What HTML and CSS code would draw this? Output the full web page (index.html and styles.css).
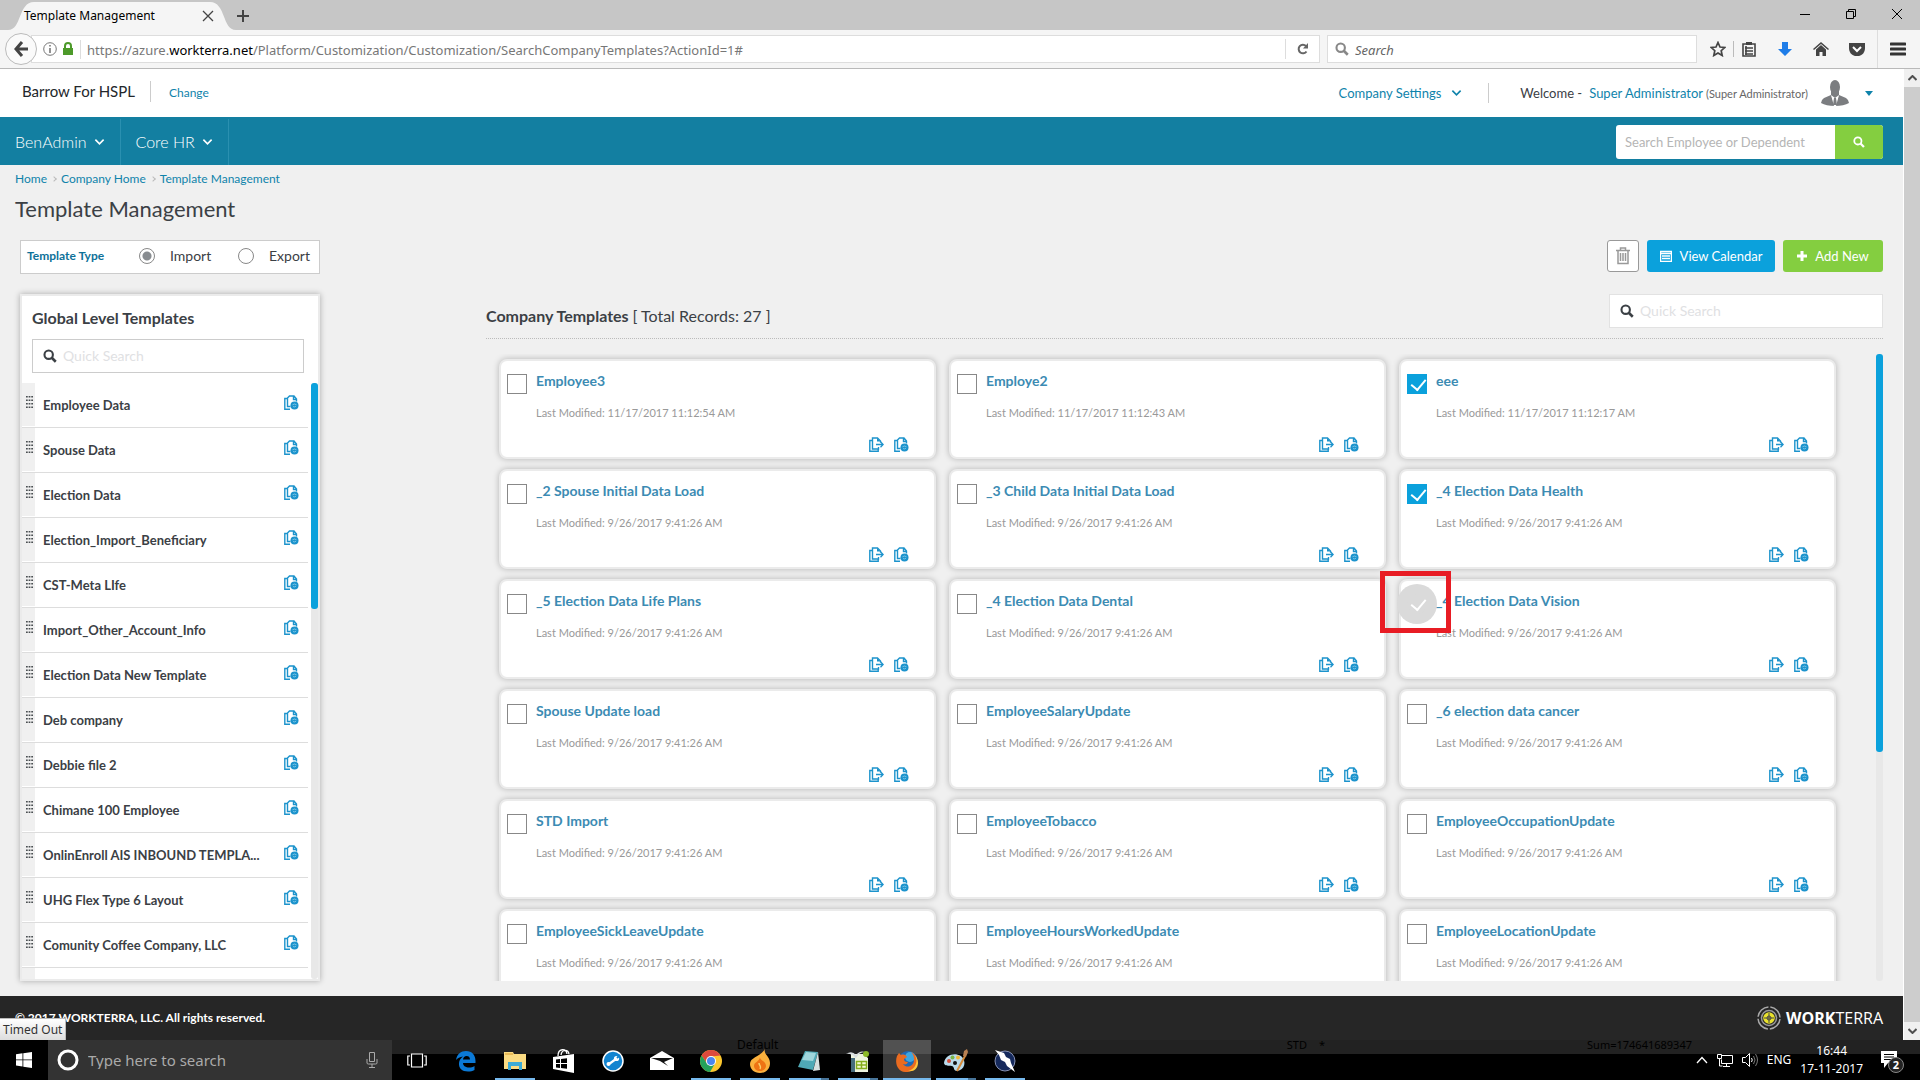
FILE: index.html
```
<!DOCTYPE html>
<html lang="en">
<head>
<meta charset="utf-8">
<title>Template Management</title>
<link rel="stylesheet" href="styles.css">
</head>
<body>
<svg class="defs" aria-hidden="true">
  <symbol id="mag" viewBox="0 0 16 16"><circle cx="6.5" cy="6.5" r="4.8" fill="none" stroke="currentColor" stroke-width="2.4"/><path d="M10 10l4.6 4.6" stroke="currentColor" stroke-width="3" fill="none"/></symbol>
  <symbol id="chev" viewBox="0 0 12 8"><path d="M1.5 1.5L6 6l4.500-4.500" fill="none" stroke="currentColor" stroke-width="1.800"/></symbol>
  <symbol id="copy" viewBox="0 0 15 15"><path d="M3 3.500H.8v10.700h8.400V12.500M9.500 10v2H3.500V1h5l3 3v1.500" fill="none" stroke="currentColor" stroke-width="1.400"/><path d="M8 1v3.500h3.500z" fill="currentColor"/><path d="M7 7.500h7M11.500 4.800l2.700 2.700-2.700 2.700" fill="none" stroke="currentColor" stroke-width="1.300"/></symbol>
  <symbol id="block" viewBox="0 0 15 15"><path d="M3 3.500H.8v10.700H6M6.500 11.500h-3V3l2-2h4.500L12.500 4v2.500M9.500 1v3.500h3" fill="none" stroke="currentColor" stroke-width="1.400"/><circle cx="10.500" cy="10.500" r="4" fill="currentColor"/><path d="M8.500 9.800q2-1.600 4 0M9 11.500q1.500 1 3-.3" fill="none" stroke="#8fd0ee" stroke-width=".8"/></symbol>
  <symbol id="grip" viewBox="0 0 8 14"><path d="M0 1h2M3 1h2M6 1h2M0 5h2M3 5h2M6 5h2M0 9h2M3 9h2M6 9h2M0 13h2M3 13h2M6 13h2" stroke="#4a4f52" stroke-width="1.500"/></symbol>
</svg>

<header class="browser">
  <div class="titlebar">
    <div class="tab"><svg class="tab-shape" viewBox="0 0 228 28" preserveAspectRatio="none"><path d="M0 28C14 28 10 0 26 0H202C218 0 214 28 228 28Z" fill="#f5f5f5"/></svg><span class="tab-title">Template Management</span><button class="bare tab-close" aria-label="Close tab"><svg width="12" height="12" viewBox="0 0 12 12"><path d="M1 1l10 10M11 1L1 11" stroke="#444" stroke-width="1.300"/></svg></button></div>
    <button class="bare new-tab" aria-label="New tab"><svg width="12" height="12" viewBox="0 0 12 12"><path d="M6 0v12M0 6h12" stroke="#444" stroke-width="2"/></svg></button>
    <div class="window-controls">
      <button class="bare" aria-label="Minimize"><svg width="10" height="10"><path d="M0 5.500h10" stroke="#000"/></svg></button>
      <button class="bare" aria-label="Restore"><svg width="10" height="10" fill="none" stroke="#000"><path d="M.5 2.500h7v7h-7zM2.500 2.500v-2h7v7h-2"/></svg></button>
      <button class="bare" aria-label="Close"><svg width="12" height="12"><path d="M1 1l10 10M11 1L1 11" stroke="#000"/></svg></button>
    </div>
  </div>
  <div class="toolbar">
    <button class="bare back" aria-label="Back"><svg width="14" height="16" viewBox="0 0 14 16"><path d="M8 1L2 8l6 7M2 8h12" fill="none" stroke="#444" stroke-width="3"/></svg></button>
    <div class="urlbar">
      <svg width="14" height="14" viewBox="0 0 14 14" fill="none" stroke="#777"><circle cx="7" cy="7" r="6.300"/><path d="M7 6v5M7 3v1.500" stroke-width="1.600"/></svg>
      <svg class="lock" width="12" height="14" viewBox="0 0 12 14"><rect x="1" y="6" width="10" height="7" fill="#4d9a2a"/><path d="M3 7V4a3 3 0 0 1 6 0v3" fill="none" stroke="#4d9a2a" stroke-width="2"/></svg>
      <span class="url">https://azure.<b>workterra.net</b>/Platform/Customization/Customization/SearchCompanyTemplates?ActionId=1#</span>
      <button class="bare reload" aria-label="Reload"><svg width="12" height="12" viewBox="0 0 12 12"><path d="M9.500 8.500A4.300 4.300 0 1 1 9 3" fill="none" stroke="#666" stroke-width="2"/><path d="M11 0v5.500H6z" fill="#666"/></svg></button>
    </div>
    <label class="websearch"><svg width="14" height="14"><use href="#mag"/></svg><input type="text" placeholder="Search" aria-label="Search the web"></label>
    <div class="tools">
      <button class="bare" aria-label="Bookmark"><svg width="16" height="16" viewBox="0 0 16 16"><path d="M8 1.500l2 4.500 4.800.5-3.600 3.200 1 4.800L8 12l-4.200 2.500 1-4.800L1.200 6.500 6 6z" fill="none" stroke="#444" stroke-width="1.700"/></svg></button>
      <i class="rule"></i>
      <button class="bare" aria-label="Library"><svg width="14" height="16" viewBox="0 0 14 16"><path d="M1 3h12v12H1zM3 7h8M3 10h8M3 13h8M4 5v9" fill="none" stroke="#444" stroke-width="1.600"/><path d="M4 1h6v3H4z" fill="#444"/></svg></button>
      <button class="bare" aria-label="Downloads"><svg width="14" height="14" viewBox="0 0 14 14"><path d="M4 0h6v7h4l-7 7-7-7h4z" fill="#1f7de8"/></svg></button>
      <button class="bare" aria-label="Home"><svg width="16" height="14" viewBox="0 0 16 14"><path d="M8 0l8 7-1 1-7-6-7 6-1-1zM3 7.500L8 3l5 4.500V14H9.500v-4h-3v4H3z" fill="#444"/></svg></button>
      <button class="bare" aria-label="Pocket"><svg width="16" height="14" viewBox="0 0 16 14"><path d="M0 1h16v5c0 11-16 11-16 0z" fill="#444"/><path d="M4 5l4 4 4-4" fill="none" stroke="#fff" stroke-width="2"/></svg></button>
      <i class="rule tall"></i>
      <button class="bare" aria-label="Menu"><svg width="16" height="14" viewBox="0 0 16 14"><path d="M1 2h14M1 7h14M1 12h14" stroke="#333" stroke-width="3" stroke-linecap="round"/></svg></button>
    </div>
  </div>
</header>

<div class="viewport">
  <div class="page">
    <header class="account">
      <span class="company">Barrow For HSPL</span>
      <a class="change" href="#">Change</a>
      <a class="settings" href="#">Company Settings <svg width="11" height="8"><use href="#chev"/></svg></a>
      <div class="welcome"><span>Welcome -</span><a href="#">Super Administrator</a><small>(Super Administrator)</small></div>
      <svg class="avatar" width="28" height="26" viewBox="0 0 28 26"><ellipse cx="14" cy="7" rx="5" ry="7" fill="#7b7d80"/><path d="M10 11h8v5l-4 3-4-3z" fill="#7b7d80"/><path d="M10 15l4 10 4-10 7 3q3 2 3 5-5 3-14 3T0 23q0-3 3-5z" fill="#7b7d80"/><path d="M10 15l3 11h2l3-11-4 3z" fill="#fff"/><path d="M13 18h2l1 7h-4z" fill="#7b7d80"/></svg>
      <button class="bare" aria-label="Account menu"><svg width="8" height="5"><path d="M0 0h8L4 5z" fill="#0f83ab"/></svg></button>
    </header>

    <nav class="mainnav">
      <button class="bare">BenAdmin <svg width="11" height="8"><use href="#chev"/></svg></button>
      <button class="bare">Core HR <svg width="11" height="8"><use href="#chev"/></svg></button>
      <form class="find"><input type="text" placeholder="Search Employee or Dependent" aria-label="Search Employee or Dependent"><button type="button" aria-label="Search"><svg width="12" height="12"><use href="#mag"/></svg></button></form>
    </nav>

    <main>
      <nav class="crumbs" aria-label="Breadcrumb"><a href="#">Home</a><i></i><a href="#">Company Home</a><i></i><a href="#">Template Management</a></nav>
      <h1>Template Management</h1>
      <div class="actions">
        <fieldset class="type">
          <legend>Template Type</legend>
          <label><input type="radio" name="type" checked>Import</label>
          <label><input type="radio" name="type">Export</label>
        </fieldset>
        <div class="buttons">
          <button class="trash" aria-label="Delete"><svg width="14" height="18" viewBox="0 0 14 18" fill="none" stroke="#999" stroke-width="1.500"><path d="M0 3.500h14M4.500 3V1h5v2M2 4v12.500h10V4M4.500 6v8M7 6v8M9.500 6v8"/></svg></button>
          <button class="calendar"><svg width="12" height="12" viewBox="0 0 12 12" fill="none" stroke="#fff"><path d="M.5 1.500h11v10H.5zM1 3.500h10M2 6h8M2 8.500h8" stroke-width="1.500"/></svg>View Calendar</button>
          <button class="add"><svg width="10" height="10"><path d="M5 0v10M0 5h10" stroke="#fff" stroke-width="3"/></svg>Add New</button>
        </div>
      </div>

      <div class="columns">
        <aside class="global">
          <h2>Global Level Templates</h2>
          <label class="quick"><svg width="14" height="14"><use href="#mag"/></svg><input type="text" placeholder="Quick Search" aria-label="Search global templates"></label>
          <div class="scroller">
            <ul>
              <li><span class="grip"><svg><use href="#grip"/></svg></span><span class="name">Employee Data</span><svg class="act"><use href="#block"/></svg></li>
              <li><span class="grip"><svg><use href="#grip"/></svg></span><span class="name">Spouse Data</span><svg class="act"><use href="#block"/></svg></li>
              <li><span class="grip"><svg><use href="#grip"/></svg></span><span class="name">Election Data</span><svg class="act"><use href="#block"/></svg></li>
              <li><span class="grip"><svg><use href="#grip"/></svg></span><span class="name">Election_Import_Beneficiary</span><svg class="act"><use href="#block"/></svg></li>
              <li><span class="grip"><svg><use href="#grip"/></svg></span><span class="name">CST-Meta LIfe</span><svg class="act"><use href="#block"/></svg></li>
              <li><span class="grip"><svg><use href="#grip"/></svg></span><span class="name">Import_Other_Account_Info</span><svg class="act"><use href="#block"/></svg></li>
              <li><span class="grip"><svg><use href="#grip"/></svg></span><span class="name">Election Data New Template</span><svg class="act"><use href="#block"/></svg></li>
              <li><span class="grip"><svg><use href="#grip"/></svg></span><span class="name">Deb company</span><svg class="act"><use href="#block"/></svg></li>
              <li><span class="grip"><svg><use href="#grip"/></svg></span><span class="name">Debbie file 2</span><svg class="act"><use href="#block"/></svg></li>
              <li><span class="grip"><svg><use href="#grip"/></svg></span><span class="name">Chimane 100 Employee</span><svg class="act"><use href="#block"/></svg></li>
              <li><span class="grip"><svg><use href="#grip"/></svg></span><span class="name">OnlinEnroll AIS INBOUND TEMPLA...</span><svg class="act"><use href="#block"/></svg></li>
              <li><span class="grip"><svg><use href="#grip"/></svg></span><span class="name">UHG Flex Type 6 Layout</span><svg class="act"><use href="#block"/></svg></li>
              <li><span class="grip"><svg><use href="#grip"/></svg></span><span class="name">Comunity Coffee Company, LLC</span><svg class="act"><use href="#block"/></svg></li>
              <li><span class="grip"></span></li>
            </ul>
            <div class="track"><i></i></div>
          </div>
        </aside>

        <section class="companyset">
          <div class="sethead">
            <h2>Company Templates <span>[ Total Records: 27 ]</span></h2>
            <label class="quick"><svg width="14" height="14"><use href="#mag"/></svg><input type="text" placeholder="Quick Search" aria-label="Search company templates"></label>
          </div>
          <div class="scroller">
            <div class="cards">
              <article class="card"><input type="checkbox" id="c1"><label for="c1">Employee3</label><p>Last Modified: 11/17/2017 11:12:54 AM</p><div class="acts"><svg><use href="#copy"/></svg><svg><use href="#block"/></svg></div></article>
              <article class="card"><input type="checkbox" id="c2"><label for="c2">Employe2</label><p>Last Modified: 11/17/2017 11:12:43 AM</p><div class="acts"><svg><use href="#copy"/></svg><svg><use href="#block"/></svg></div></article>
              <article class="card"><input type="checkbox" id="c3" checked><label for="c3">eee</label><p>Last Modified: 11/17/2017 11:12:17 AM</p><div class="acts"><svg><use href="#copy"/></svg><svg><use href="#block"/></svg></div></article>
              <article class="card"><input type="checkbox" id="c4"><label for="c4">_2 Spouse Initial Data Load</label><p>Last Modified: 9/26/2017 9:41:26 AM</p><div class="acts"><svg><use href="#copy"/></svg><svg><use href="#block"/></svg></div></article>
              <article class="card"><input type="checkbox" id="c5"><label for="c5">_3 Child Data Initial Data Load</label><p>Last Modified: 9/26/2017 9:41:26 AM</p><div class="acts"><svg><use href="#copy"/></svg><svg><use href="#block"/></svg></div></article>
              <article class="card"><input type="checkbox" id="c6" checked><label for="c6">_4 Election Data Health</label><p>Last Modified: 9/26/2017 9:41:26 AM</p><div class="acts"><svg><use href="#copy"/></svg><svg><use href="#block"/></svg></div></article>
              <article class="card"><input type="checkbox" id="c7"><label for="c7">_5 Election Data Life Plans</label><p>Last Modified: 9/26/2017 9:41:26 AM</p><div class="acts"><svg><use href="#copy"/></svg><svg><use href="#block"/></svg></div></article>
              <article class="card"><input type="checkbox" id="c8"><label for="c8">_4 Election Data Dental</label><p>Last Modified: 9/26/2017 9:41:26 AM</p><div class="acts"><svg><use href="#copy"/></svg><svg><use href="#block"/></svg></div></article>
              <article class="card pressed"><input type="checkbox" id="c9" checked><label for="c9">_4 Election Data Vision</label><p>Last Modified: 9/26/2017 9:41:26 AM</p><div class="acts"><svg><use href="#copy"/></svg><svg><use href="#block"/></svg></div><i class="callout"></i></article>
              <article class="card"><input type="checkbox" id="c10"><label for="c10">Spouse Update load</label><p>Last Modified: 9/26/2017 9:41:26 AM</p><div class="acts"><svg><use href="#copy"/></svg><svg><use href="#block"/></svg></div></article>
              <article class="card"><input type="checkbox" id="c11"><label for="c11">EmployeeSalaryUpdate</label><p>Last Modified: 9/26/2017 9:41:26 AM</p><div class="acts"><svg><use href="#copy"/></svg><svg><use href="#block"/></svg></div></article>
              <article class="card"><input type="checkbox" id="c12"><label for="c12">_6 election data cancer</label><p>Last Modified: 9/26/2017 9:41:26 AM</p><div class="acts"><svg><use href="#copy"/></svg><svg><use href="#block"/></svg></div></article>
              <article class="card"><input type="checkbox" id="c13"><label for="c13">STD Import</label><p>Last Modified: 9/26/2017 9:41:26 AM</p><div class="acts"><svg><use href="#copy"/></svg><svg><use href="#block"/></svg></div></article>
              <article class="card"><input type="checkbox" id="c14"><label for="c14">EmployeeTobacco</label><p>Last Modified: 9/26/2017 9:41:26 AM</p><div class="acts"><svg><use href="#copy"/></svg><svg><use href="#block"/></svg></div></article>
              <article class="card"><input type="checkbox" id="c15"><label for="c15">EmployeeOccupationUpdate</label><p>Last Modified: 9/26/2017 9:41:26 AM</p><div class="acts"><svg><use href="#copy"/></svg><svg><use href="#block"/></svg></div></article>
              <article class="card"><input type="checkbox" id="c16"><label for="c16">EmployeeSickLeaveUpdate</label><p>Last Modified: 9/26/2017 9:41:26 AM</p></article>
              <article class="card"><input type="checkbox" id="c17"><label for="c17">EmployeeHoursWorkedUpdate</label><p>Last Modified: 9/26/2017 9:41:26 AM</p></article>
              <article class="card"><input type="checkbox" id="c18"><label for="c18">EmployeeLocationUpdate</label><p>Last Modified: 9/26/2017 9:41:26 AM</p></article>
            </div>
            <div class="track"><i></i></div>
          </div>
        </section>
      </div>
    </main>

    <footer class="legal">
      <span>© 2017 WORKTERRA, LLC. All rights reserved.</span>
      <div class="brand"><svg width="24" height="24" viewBox="0 0 24 24" fill="none"><circle cx="12" cy="12" r="11" stroke="#aaa" stroke-width="1.500" stroke-dasharray="15.300 2" stroke-dashoffset="-1"/><circle cx="12" cy="12" r="7.500" stroke="#999" stroke-width="1.500"/><circle cx="12" cy="12" r="5.800" fill="#e9e22d"/><path d="M12 7v10M7 12h10" stroke="#444"/><circle cx="12" cy="12" r="2" stroke="#444"/></svg><span><b>WORK</b>TERRA</span></div>
    </footer>
    <div class="status">Timed Out</div>
  </div>
  <div class="pagescroll">
    <svg width="9" height="6"><path d="M.5 5l4-4 4 4" fill="none" stroke="#505050" stroke-width="2"/></svg>
    <i></i>
    <svg width="9" height="6"><path d="M.5 1l4 4 4-4" fill="none" stroke="#505050" stroke-width="2"/></svg>
  </div>
</div>

<footer class="taskbar">
  <button class="start" aria-label="Start"><svg width="16" height="16" viewBox="0 0 16 16"><path d="M0 2.200L6.500 1.300v6.200H0zM7.300 1.200L16 0v7.500H7.300zM0 8.300h6.500v6.200L0 13.600zM7.300 8.300H16V16l-8.700-1.200z" fill="#fff"/></svg></button>
  <label class="cortana"><svg width="22" height="22"><circle cx="11" cy="11" r="9" fill="none" stroke="#fff" stroke-width="3"/></svg><input type="text" placeholder="Type here to search" aria-label="Type here to search"><svg width="12" height="16" viewBox="0 0 12 16" fill="none" stroke="#aaa"><path d="M3.500 .5h5v9h-5zM1 7v4q0 1 1.500 1h7Q11 12 11 11V7M6 12v3.500M3 15.500h6"/></svg></label>
  <div class="apps">
    <button aria-label="Task view"><svg width="20" height="16" viewBox="0 0 20 16" fill="none" stroke="#fff" stroke-width="1.200"><path d="M4.500 1h11v13h-11zM3 3H.8v9H3M17 3h2.200v9H17"/></svg></button>
    <button aria-label="Edge"><svg width="22" height="22" viewBox="0 0 22 22"><path d="M1 10C2 4 6 1 11 1c6 0 9.500 4 9.500 10v2H8c0 3 3 4.500 6 4.500 2 0 4-.5 5.500-1.500v4c-2 1-4 1.500-6.500 1.500C7 21.500 3.500 18 4 13c.2-3 2-5 4-6.500C5 7 2.500 8 1 10zM8 9.500h7C15 7 13.500 6 11.600 6 9.600 6 8.300 7.500 8 9.500z" fill="#0b79d6"/></svg></button>
    <button class="on" aria-label="File Explorer"><svg width="22" height="20" viewBox="0 0 22 20"><path d="M0 1h9l1 2h12v15H0z" fill="#fbdc83"/><path d="M1 3h8" stroke="#d79a2c"/><path d="M4 19v-8h14v8h-3v-4H7v4z" fill="#3cabd6"/></svg></button>
    <button aria-label="Store"><svg width="22" height="24" viewBox="0 0 22 24"><path d="M0 8l21-3v19L0 20z" fill="#fff"/><path d="M5 7c0-8 8-8 9-2M8 6c1-6 7-6 8-1" fill="none" stroke="#fff" stroke-width="1.300"/><path d="M3 10.500l4-.5v4H3zM8 10l6-.8V14H8zM3 15h4v4l-4-.5zM8 15h6v4.800L8 19z" fill="#000"/></svg></button>
    <button aria-label="Support"><svg width="22" height="22" viewBox="0 0 22 22"><circle cx="11" cy="11" r="10" fill="#1284d0" stroke="#fff" stroke-width="1.500"/><path d="M7 14l7-5" stroke="#fff" stroke-width="2.200"/><circle cx="6.500" cy="14" r="2" fill="#fff"/><circle cx="14.500" cy="8.500" r="2.600" fill="#fff"/><path d="M15 8l3-3" stroke="#1284d0" stroke-width="2"/></svg></button>
    <button aria-label="Mail"><svg width="24" height="20" viewBox="0 0 24 20"><path d="M0 7l12-7 12 7v12H0z" fill="#fff"/><path d="M1 7h22l-9 4 4 4-8-5z" fill="#111"/></svg></button>
    <button class="on" aria-label="Chrome"><svg width="22" height="22" viewBox="0 0 22 22"><circle cx="11" cy="11" r="11" fill="#fbc72e"/><path d="M1.500 5.500a11 11 0 0 1 19 0L11 6.500l-4 7z" fill="#dc4a3d"/><path d="M1.500 5.500A11 11 0 0 0 10 22l5-8.500-8 0z" fill="#24a15a"/><circle cx="11" cy="11" r="5" fill="#fff"/><circle cx="11" cy="11" r="4" fill="#4a86ef"/></svg></button>
    <button class="on" aria-label="Burner"><svg width="20" height="24" viewBox="0 0 20 24"><path d="M15 0c-2 5 5 7 5 14 0 6-4 10-10 10S0 20 0 15C0 8 10 8 15 0z" fill="#fbb13d"/><path d="M10 8c-1 3 6 4 6 9 0 3-3 5-6 5s-6-2-6-5c0-4 5-4 6-9z" fill="#ee7414"/><path d="M9 14c0 3 3 3 1 6" stroke="#fbd06a" stroke-width="1.500" fill="none"/></svg></button>
    <button class="on multi" aria-label="Notepad"><svg width="22" height="22" viewBox="0 0 22 22"><path d="M7 1l13 1-5 18-15-3z" fill="#4fa9b6"/><path d="M8 2l10 1-3 8-11-1z" fill="#9fd6dc"/><path d="M20 2l2 18-7 1z" fill="#d8e0e0"/></svg></button>
    <button class="on multi" aria-label="Spreadsheet"><svg width="24" height="22" viewBox="0 0 24 22"><path d="M5 4h12l5 4v14H5z" fill="#eef4e0"/><path d="M5 8h4v14H5z" fill="#466b7c"/><path d="M0 4q6-4 10 1 4-5 9-3-6 0-9 6Q5 3 0 4z" fill="#d8dde0"/><path d="M10.500 11.500h10v7h-10zM15.500 11.500v7M10.500 15h10" fill="#f3f8d0" stroke="#86ad1e" stroke-width="1.500"/><circle cx="20" cy="4" r="3" fill="#8cba27"/></svg></button>
    <button class="on current" aria-label="Firefox"><svg width="22" height="22" viewBox="0 0 22 22"><circle cx="12" cy="10.500" r="9.500" fill="#1f69b5"/><circle cx="14" cy="7" r="5" fill="#3ea6e0"/><path d="M1 6l2-3 2 2c3-1 5 0 6 2l-3 2c0 2 1 3 4 3-1 2-2 3-5 2 4 5 11 2 11-4 0-4-1-6-3-8 9 4 9 18-3 20C3 23-2 15 1 6z" fill="#ea6b20"/><path d="M18 4c5 6 2 15-6 17 9 2 14-9 6-17z" fill="#ffc43a"/></svg></button>
    <button class="on multi" aria-label="Paint"><svg width="24" height="24" viewBox="0 0 24 24"><path d="M0 14C1 6 10 3 17 7c6 5 4 14-4 15-4 0-2-4-5-5s-7 1-8-3z" fill="#b9d9ea"/><circle cx="5" cy="12" r="2" fill="#d8503c"/><circle cx="8.500" cy="8.500" r="2" fill="#7ab648"/><circle cx="14" cy="8.500" r="2" fill="#f1b73a"/><circle cx="11" cy="14" r="2" fill="#111"/><path d="M13 22l8-15" stroke="#d58a3a" stroke-width="2"/><path d="M19 7l1-5 3-2 1 3-2 5z" fill="#b98153"/></svg></button>
    <button class="on" aria-label="Editor"><svg width="24" height="24" viewBox="0 0 24 24"><circle cx="12" cy="12" r="10" fill="#15295c" stroke="#8792b5"/><path d="M2 1l9 3 2 4 4 2 1 4 4 9-8-6-2-4-4-2-2-5z" fill="#fff"/></svg></button>
  </div>
  <div class="ghost"><span>Default</span><span>STD</span><span>*</span><span>Sum=174641689347</span></div>
  <div class="tray">
    <svg width="12" height="8" viewBox="0 0 12 8"><path d="M1 7l5-5.500L11 7" fill="none" stroke="#fff" stroke-width="1.300"/></svg>
    <svg width="16" height="14" viewBox="0 0 16 14" fill="none" stroke="#fff"><path d="M4.500 2.500h11v8h-11v-4M9.500 11v2M6 13.500h7M.5 1.500h4v4h-4zM2.500 6v7h3"/></svg>
    <svg width="16" height="14" viewBox="0 0 16 14" fill="none" stroke="#fff"><path d="M.5 4.500h3l4-4v13l-4-4h-3zM9.500 5q1.500 2 0 4"/><path d="M11.500 3q3 4 0 8M13.500 1q4 6 0 12" stroke="#777"/></svg>
    <span>ENG</span>
    <time datetime="2017-11-17T16:44">16:44<br>17-11-2017</time>
    <div class="notes"><svg width="18" height="18" viewBox="0 0 18 18"><path d="M1 0h16v12H8l-4 5v-5H1z" fill="#fff"/><path d="M4 3.500h10M4 6h10M4 8.500h10" stroke="#000"/></svg><b>2</b></div>
  </div>
</footer>
</body>
</html>
```
FILE: styles.css
```
* { box-sizing: border-box; }
html, body { height: 100%; margin: 0; }
body { display: flex; flex-direction: column; overflow: hidden; font: 14px/20px Lato, "Open Sans", sans-serif; color: #3b4045; background: #f0f0f0; }
a { color: #0f83ab; text-decoration: none; }
button, input { font: inherit; color: inherit; }
button { display: flex; align-items: center; justify-content: center; cursor: pointer; padding: 0; }
input[type="text"] { flex: 1; min-width: 0; width: 100%; border: 0; padding: 0; background: none; outline: 0; }
h1, h2, p, ul { margin: 0; padding: 0; }
ul { list-style: none; }
svg { display: block; flex: none; }
.defs { position: absolute; width: 0; height: 0; }
.bare { border: 0; background: none; }

/* Browser chrome */
.browser { flex: none; font: 13px/18px "Noto Sans", "Open Sans", sans-serif; border-bottom: 1px solid #b9b9b9; }
.titlebar { display: flex; height: 30px; background: #c6c6c6; }
.tab { position: relative; display: flex; align-items: center; width: 228px; margin: 2px 0 0 8px; padding: 0 22px 0 16px; }
.tab-shape { position: absolute; inset: 0; width: 100%; height: 100%; }
.tab-title { position: relative; flex: 1; font-size: 12px; color: #000; }
.tab-close { position: relative; }
.new-tab { width: 14px; padding-top: 2px; }
.window-controls { display: flex; margin-left: auto; padding-bottom: 2px; }
.window-controls button { width: 46px; }
.toolbar { display: flex; align-items: center; height: 38px; background: #f5f5f5; padding: 0 4px 0 5px; }
.back { width: 32px; height: 32px; border: 1px solid #bbb; border-radius: 50%; background: #fafafa; z-index: 1; }
.urlbar { display: flex; align-items: center; flex: 1; height: 28px; margin-left: -6px; padding-left: 11px; background: #fff; border: 1px solid #ddd; }
.lock { margin-left: 5px; }
.url { flex: 1; margin-left: 6px; padding: 1px 0 0 6px; border-left: 1px solid #ddd; color: #777; white-space: nowrap; }
.url b { font-weight: 400; color: #000; }
.reload { width: 34px; height: 20px; border-left: 1px solid #ddd; }
.websearch { display: flex; align-items: center; gap: 6px; flex: none; width: 370px; height: 28px; margin-left: 7px; padding-left: 7px; background: #fff; border: 1px solid #ddd; color: #888; }
.websearch input { padding-top: 1px; }
.websearch input::placeholder { color: #666; font-style: italic; opacity: 1; }
.tools { display: flex; align-items: center; height: 38px; padding-left: 3px; }
.tools button { width: 36px; }
.rule { width: 1px; height: 16px; background: #bbb; margin: 0 -3px; }
.rule.tall { height: 38px; background: #ddd; margin: 0 2px; }

/* Page frame */
.viewport { display: flex; flex: 1; min-height: 0; }
.page { position: relative; display: flex; flex-direction: column; flex: 1; min-width: 0; }
.pagescroll { display: flex; flex-direction: column; align-items: center; gap: 6px; width: 17px; padding: 6px 0; background: #f0f0f0; border-left: 1px solid #fff; }
.pagescroll i { flex: 1; width: 100%; background: #cdcdcd; }

.account { display: flex; align-items: center; flex: none; height: 48px; padding: 0 30px 0 22px; background: #fff; font-size: 13px; }
.company { margin-bottom: 3px; font-size: 15px; line-height: 21px; padding-right: 15px; border-right: 1px solid #ccc; color: #22262a; }
.change { margin-left: 18px; font-size: 12px; }
.settings { display: flex; align-items: center; gap: 10px; margin-left: auto; padding-right: 26px; border-right: 1px solid #ccc; }
.welcome { display: flex; align-items: baseline; gap: 7px; margin: 0 13px 0 31px; white-space: nowrap; }
.welcome small { font-size: 11px; margin-left: -4px; color: #666; }
.avatar { margin-right: 16px; }

.mainnav { display: flex; flex: none; height: 48px; background: #137fa1; color: #fff; padding: 2px 20px 0 0; }
.mainnav > button { gap: 7px; padding: 0 15px; border-right: 1px solid #2a90b0; font-size: 16px; font-weight: 300; }
.find { display: flex; align-self: center; width: 267px; height: 34px; margin-left: auto; border-radius: 3px; overflow: hidden; background: #fff; color: #444; font-size: 13px; }
.find input { padding-left: 9px; }
.find input::placeholder { color: #b5b5b5; opacity: 1; }
.find button { width: 48px; border: 0; background: #84ce40; color: #fff; }

main { display: flex; flex-direction: column; flex: 1; min-height: 0; padding: 4px 20px 15px; }
.crumbs { display: flex; align-items: center; gap: 5px; margin-left: -5px; font-size: 12px; }
.crumbs i { width: 4px; height: 4px; border: solid #bbb; border-width: 1px 1px 0 0; transform: rotate(45deg); }
h1 { margin: 5px 0 16px -5px; font-size: 22px; line-height: 30px; font-weight: 400; }
.actions { display: flex; justify-content: space-between; height: 34px; margin-bottom: 20px; }
.type { display: flex; align-items: center; width: 300px; height: 34px; margin: 0; padding: 0 9px 2px 6px; border: 1px solid #ccc; background: #fff; }
.type legend { float: left; width: 112px; padding: 0; color: #0e7199; font-size: 12px; font-weight: 700; }
.type label { display: flex; align-items: center; gap: 15px; white-space: nowrap; }
.type label + label { margin-left: auto; }
.type input { appearance: none; width: 16px; height: 16px; margin: 0; border: 1px solid #888; border-radius: 50%; background: #fff; }
.type input:checked { background: radial-gradient(circle, #888c90 4px, #fff 5px); }
.buttons { display: flex; gap: 8px; height: 32px; }
.buttons button { gap: 8px; border: 0; border-radius: 3px; color: #fff; font-size: 13px; }
.buttons .trash { width: 32px; background: #fff; border: 1px solid #999; }
.buttons .calendar { width: 128px; background: #0ba1dc; }
.buttons .add { width: 100px; background: #84ce40; }

.columns { display: flex; gap: 166px; flex: 1; min-height: 0; }
h2 { font-size: 16px; line-height: 20px; font-weight: 700; }
.quick { display: flex; align-items: center; gap: 6px; height: 34px; padding-left: 10px; background: #fff; border: 1px solid #ccc; }
.quick input::placeholder { color: #dfe1e3; opacity: 1; }
.scroller { display: flex; flex: 1; min-height: 0; overflow: hidden; }
.track { flex: none; width: 7px; background: #e8e8e8; border-radius: 3px; }
.track i { display: block; background: #0ba1dc; border-radius: 3px; }

.global { display: flex; flex-direction: column; flex: none; width: 300px; border: 2px solid #ebebeb; background: #fff; box-shadow: 0 0 6px rgba(0, 0, 0, .3); }
.global h2 { margin: 12px 10px 11px; }
.global .quick { margin: 0 14px 10px 10px; }
.global ul { flex: 1; margin-right: 3px; }
.global li { display: flex; align-items: center; height: 45px; padding-right: 9px; border-bottom: 1px solid #ddd; }
.grip { align-self: stretch; width: 13px; padding: 12px 0 0 4px; background: #f0f0f0; border-bottom: 1px solid #fff; }
.grip svg { width: 7px; height: 14px; }
.name { flex: 1; padding-left: 8px; font-size: 13px; font-weight: 700; white-space: nowrap; }
.act, .acts svg { width: 15px; height: 15px; color: #1c93cc; }
.act { align-self: flex-start; margin-top: 12px; }
.global .track i { height: 226px; }

.companyset { display: flex; flex-direction: column; flex: 1; min-width: 0; }
.sethead { display: flex; align-items: flex-start; justify-content: space-between; height: 45px; margin-bottom: 15px; border-bottom: 1px dotted #bbb; }
.sethead h2 { margin-top: 12px; }
.sethead h2 span { font-weight: 400; }
.sethead .quick { width: 274px; border-color: #e2e2e2; }
.companyset .track i { height: 398px; }
.cards { display: grid; grid-template-columns: repeat(3, 1fr); grid-auto-rows: 100px; gap: 10px 13px; flex: 1; padding: 5px 0 0 13px; margin-right: 40px; }
.card { position: relative; display: grid; grid-template-columns: 20px 1fr; grid-template-rows: 32px 20px 1fr; column-gap: 9px; align-items: start; padding: 10px 25px 5px 6px; border: 2px solid #ebebeb; border-radius: 8px; background: #fff; box-shadow: 0 0 6px rgba(0, 0, 0, .25); }
.card input { appearance: none; width: 20px; height: 20px; margin: 3px 0 0; border: 1px solid #888; background: #fff; }
.card input:checked { border: 0; background: #0ba1dc; }
.card input:checked::after { content: ""; display: block; width: 7px; height: 12px; margin: 2px 0 0 7px; border: solid #fff; border-width: 0 2px 2px 0; transform: rotate(40deg); }
.card label { color: #3c8bb3; font-size: 14px; font-weight: 700; }
.card p { grid-column: 2; font-size: 11px; color: #999; }
.acts { grid-column: 2; align-self: end; justify-self: end; display: flex; gap: 10px; }
.pressed input:checked { background: #dadada; box-shadow: 0 0 0 10px #dadada; border-radius: 50%; }
.callout { position: absolute; left: -21px; top: -10px; width: 71px; height: 62px; border: 5px solid #e81c24; }

.legal { display: flex; align-items: center; justify-content: space-between; flex: none; height: 44px; padding: 0 20px 0 15px; background: #262626; color: #fff; font-size: 12px; font-weight: 700; }
.brand { display: flex; align-items: center; gap: 5px; font: 16px/20px "Open Sans", sans-serif; }
.status { position: absolute; left: 0; bottom: 0; padding: 2px 3px 1px; background: linear-gradient(#fff, #ddd); border: 1px solid #bbb; border-width: 1px 1px 0 0; color: #333; font: 12px/18px "Noto Sans", sans-serif; }

/* Taskbar */
.taskbar { position: relative; display: flex; flex: none; height: 40px; background: linear-gradient(#222 14px, #000 14px); color: #fff; font: 12px/18px "Noto Sans", sans-serif; }
.taskbar button { border: 0; background: none; }
.taskbar .start { width: 48px; background: #000; }
.cortana { display: flex; align-items: center; width: 344px; gap: 9px; padding: 0 14px 0 9px; background: #333; font-size: 15px; }
.cortana input::placeholder { color: #aaa; opacity: 1; }
.apps { display: flex; gap: 1px; }
.taskbar .apps { padding-left: 1px; }
.taskbar .apps button { width: 48px; border: solid transparent; border-width: 3px 4px 2px; }
.taskbar .apps .on { background: linear-gradient(#76b9ed, #76b9ed) 50% 100% / 40px 2px no-repeat border-box; }
.taskbar .apps .multi { background-image: linear-gradient(90deg, #76b9ed 32px, #48759a 32px); }
.taskbar .apps .current { background: linear-gradient(#515151 14px, #3a3a3a 14px); border-bottom-color: #76b9ed; border-left-width: 0; border-right-width: 0; background-clip: border-box; background-origin: border-box; }
.ghost { position: absolute; left: 737px; right: 228px; top: -4px; display: flex; gap: 12px; color: #000; }
.ghost span:nth-child(2) { margin-left: auto; }
.ghost span:last-child { margin-left: 250px; }
.ghost span + span { font-size: 11px; }
.tray { display: flex; align-items: center; gap: 9px; margin-left: auto; padding-right: 16px; }
.tray time { text-align: center; }
.notes { position: relative; margin-left: 8px; width: 24px; }
.notes b { position: absolute; left: 8px; top: 6px; width: 16px; height: 16px; border: 1px solid #888; border-radius: 50%; background: #222; font-size: 11px; line-height: 14px; text-align: center; }
```
